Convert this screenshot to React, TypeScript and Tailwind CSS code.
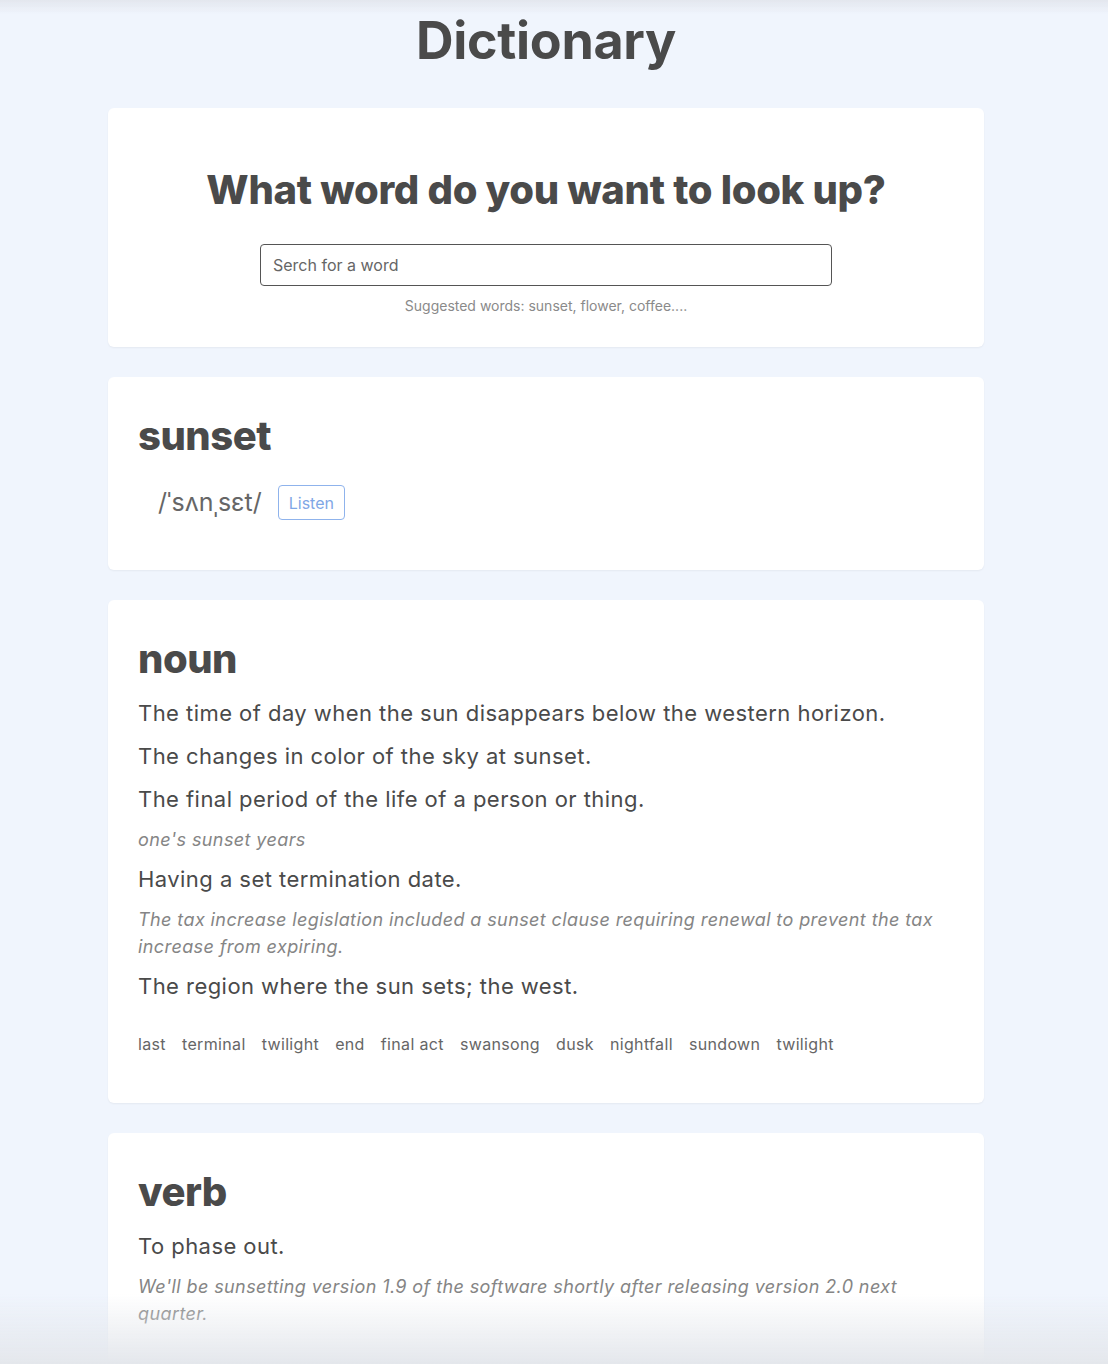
const definitionsNoun = [
  { text: 'The time of day when the sun disappears below the western horizon.' },
  { text: 'The changes in color of the sky at sunset.' },
  { text: 'The final period of the life of a person or thing.', example: "one's sunset years" },
  {
    text: 'Having a set termination date.',
    example: 'The tax increase legislation included a sunset clause requiring renewal to prevent the tax increase from expiring.',
  },
  { text: 'The region where the sun sets; the west.' },
];

const synonyms = ['last', 'terminal', 'twilight', 'end', 'final act', 'swansong', 'dusk', 'nightfall', 'sundown', 'twilight'];

const Card = ({ children, className = '' }: { children: React.ReactNode; className?: string }) => (
  <section className={`w-[876px] mx-auto bg-white rounded-md shadow-[0_1px_2px_rgba(0,0,0,0.05)] ${className}`}>{children}</section>
);

const Definition = ({ text, example }: { text: string; example?: string }) => (
  <div>
    <p className="text-[22px] leading-[43px] tracking-[0.45px] text-[#4a4a4a]">{text}</p>
    {example && (
      <p className="mt-[5px] mb-[5px] text-[18px] leading-[27px] tracking-[0.4px] italic text-[#858585]">{example}</p>
    )}
  </div>
);

export default function App() {
  return (
    <div className="min-h-screen bg-[#f0f5fd] text-[#4a4a4a]" style={{ fontFamily: 'Inter, "Noto Sans", sans-serif' }}>
      <div className="w-[1092px] pb-[40px]">
        <h1 className="text-center text-[52px] font-bold leading-[82px] tracking-[-0.3px]">Dictionary</h1>

        <div className="mt-[26px] flex flex-col gap-[30px]">
          <Card className="pt-[57px] pb-[31px]">
            <h2 className="text-center text-[40px] font-extrabold leading-[50px] tracking-[-0.3px]">What word do you want to look up?</h2>
            <div className="mt-[29px] flex justify-center">
              <input
                type="search"
                placeholder="Serch for a word"
                className="w-[572px] h-[42px] border border-[#555] rounded-[4px] px-[12px] text-[16px] text-[#4a4a4a] placeholder:text-[#666] outline-none"
              />
            </div>
            <p className="mt-[9px] text-center text-[14px] text-[#8a8a8a]">Suggested words: sunset, flower, coffee....</p>
          </Card>

          <Card className="pt-[34px] pb-[48px] px-[30px]">
            <h2 className="text-[40px] font-extrabold leading-[50px] tracking-[-0.5px]">sunset</h2>
            <div className="mt-[23px] flex items-center pl-[20px]">
              <span className="text-[25px] text-[#666]">/ˈsʌnˌsɛt/</span>
              <button className="ml-[16px] h-[35px] px-[10px] border border-[#8fb3ec] rounded-[4px] text-[16px] text-[#7fa7e6]">Listen</button>
            </div>
          </Card>

          <Card className="pt-[34px] pb-[47px] px-[30px]">
            <h2 className="text-[40px] font-extrabold leading-[50px] tracking-[-0.5px]">noun</h2>
            <div className="mt-[8px]">
              {definitionsNoun.map((d, i) => (
                <Definition key={i} text={d.text} example={d.example} />
              ))}
            </div>
            <div className="mt-[24px] flex flex-wrap gap-x-[16px] text-[16px] tracking-[0.35px] text-[#666]">
              {synonyms.map((s, i) => (
                <span key={i}>{s}</span>
              ))}
            </div>
          </Card>

          <Card className="pt-[34px] pb-[60px] px-[30px]">
            <h2 className="text-[40px] font-extrabold leading-[50px] tracking-[-0.5px]">verb</h2>
            <div className="mt-[8px]">
              <Definition
                text="To phase out."
                example="We'll be sunsetting version 1.9 of the software shortly after releasing version 2.0 next quarter."
              />
            </div>
          </Card>
        </div>
      </div>

      <div className="pointer-events-none fixed inset-x-0 top-0 h-[14px] bg-gradient-to-b from-[#e3e7ee] to-transparent" />
      <div className="pointer-events-none fixed inset-x-0 bottom-0 h-[70px] bg-gradient-to-b from-transparent to-[#e4e7ec]" />
    </div>
  );
}
